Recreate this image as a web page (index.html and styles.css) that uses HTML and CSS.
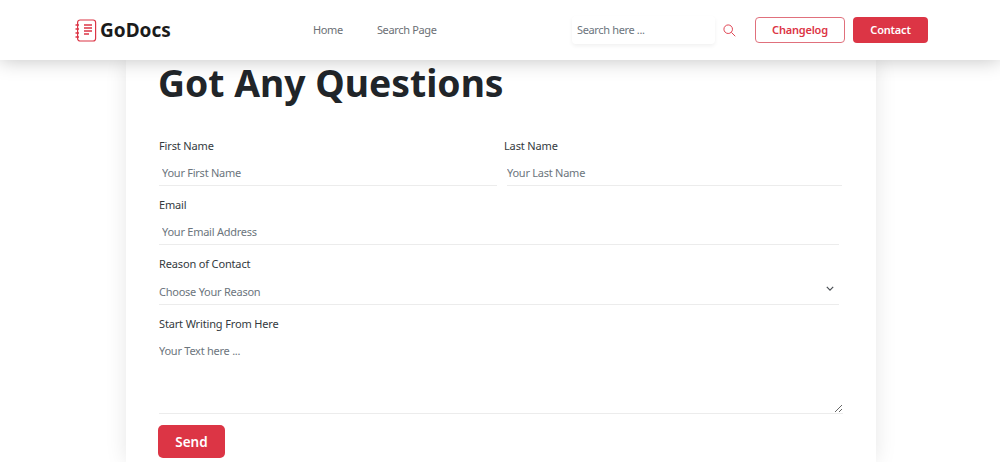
FILE: index.html
```html
<!DOCTYPE html>
<html lang="en">
<head>
  <meta charset="UTF-8" />
  <meta name="viewport" content="width=device-width, initial-scale=1" />
  <title>GoDocs - Contact</title>
  <link rel="stylesheet" href="styles.css">
</head>
<body>
  <header class="topbar">
    <a class="logo" href="#">
      <svg class="logo-icon" viewBox="0 0 22 23" width="22" height="23" fill="none" stroke="#dc3545" stroke-width="1.2">
        <rect x="2.6" y="1" width="18" height="21" rx="2.5" />
        <path d="M0.5 6h3.5M0.5 10h3.5M0.5 14h3.5M0.5 18h3.5" stroke-width="1.6" />
        <path d="M9 6h8M9 9h8M9 12h8M9 15h5" stroke-width="1.4" />
      </svg>
      <span>GoDocs</span>
    </a>
    <nav class="nav">
      <a href="#">Home</a>
      <a href="#">Search Page</a>
    </nav>
    <div class="search">
      <input type="text" placeholder="Search here ..." />
      <svg viewBox="0 0 14 14" width="13" height="13" fill="none" stroke="#dc3545" stroke-width="1">
        <circle cx="5.6" cy="5.6" r="4.6" />
        <path d="M9 9l4.2 4.2" />
      </svg>
    </div>
    <a class="btn btn-outline" href="#">Changelog</a>
    <a class="btn btn-red" href="#">Contact</a>
  </header>

  <main class="card">
    <h1>Got Any Questions</h1>
    <form class="contact-form">
      <div class="row-two">
        <div class="field">
          <label>First Name</label>
          <input type="text" placeholder="Your First Name" />
        </div>
        <div class="field field-last">
          <label>Last Name</label>
          <input type="text" placeholder="Your Last Name" />
        </div>
      </div>
      <div class="field field-wide">
        <label>Email</label>
        <input type="text" placeholder="Your Email Address" />
      </div>
      <div class="field field-wide">
        <label>Reason of Contact</label>
        <div class="select-box">
          <select>
            <option>Choose Your Reason</option>
          </select>
          <svg viewBox="0 0 10 6" width="8" height="5" fill="none" stroke="#4a4f54" stroke-width="1.5">
            <path d="M1 1l4 4 4-4" />
          </svg>
        </div>
      </div>
      <div class="field">
        <label>Start Writing From Here</label>
        <textarea placeholder="Your Text here ..."></textarea>
      </div>
      <button type="button" class="send">Send</button>
    </form>
  </main>
</body>
</html>
```

FILE: styles.css
```css
* {
  box-sizing: border-box;
}

html,
body {
  height: 462px;
  overflow: hidden;
}

body {
  margin: 0;
  font-family: 'Noto Sans', sans-serif;
  background: #fff;
  color: #212529;
}

a {
  text-decoration: none;
}

.topbar {
  position: relative;
  z-index: 2;
  display: flex;
  align-items: center;
  height: 60px;
  padding: 0 72px 0 75px;
  background: #fff;
  box-shadow: 0 0 20px rgba(0, 0, 0, 0.25);
}

.logo {
  display: flex;
  align-items: center;
  gap: 3px;
  width: 238px;
  font-size: 19px;
  font-weight: 700;
  color: #1b1b1b;
}

.nav {
  display: flex;
  gap: 34px;
  width: 259px;
  padding-bottom: 2px;
}

.nav a {
  font-size: 11px;
  letter-spacing: -0.35px;
  color: #6c7075;
}

.search {
  display: flex;
  align-items: center;
  width: 183px;
  height: 28px;
}

.search input {
  width: 143px;
  height: 28px;
  padding: 0 5px 2px;
  margin-right: 8px;
  border: 0;
  border-radius: 4px;
  outline: 0;
  font: 11px 'Noto Sans', sans-serif;
  letter-spacing: -0.35px;
  box-shadow: 0 2px 4px rgba(0, 0, 0, 0.06);
}

input::placeholder,
textarea::placeholder {
  color: #6c757d;
  opacity: 1;
}

.btn {
  display: flex;
  align-items: center;
  justify-content: center;
  height: 26px;
  padding-bottom: 2px;
  border-radius: 4px;
  font-size: 11px;
  font-weight: 600;
  letter-spacing: -0.2px;
}

.btn-outline {
  width: 90px;
  margin-right: 8px;
  border: 1px solid #e0707c;
  color: #dc3545;
}

.btn-red {
  width: 75px;
  background: #dc3545;
  color: #fff;
}

.card {
  width: 750px;
  height: 402px;
  margin: 0 0 0 126px;
  padding: 0 33px;
  background: #fff;
  box-shadow: 0 0 20px rgba(0, 0, 0, 0.1);
}

h1 {
  margin: 0 0 0 -1px;
  font-size: 37.3px;
  line-height: 46px;
  font-weight: 700;
  color: #212529;
}

.contact-form {
  display: flex;
  flex-direction: column;
  padding-top: 31px;
  gap: 10px;
}

.row-two {
  display: flex;
}

.field {
  display: flex;
  flex-direction: column;
}

.row-two .field {
  width: 338px;
}

.field-last {
  margin-left: 7px;
}

label {
  font-size: 11px;
  line-height: 18px;
  letter-spacing: -0.15px;
  color: #343a40;
}

.field input,
.field select,
.field textarea {
  width: 100%;
  border: 0;
  border-bottom: 1px solid #ececec;
  outline: 0;
  background: transparent;
  font: 11px 'Noto Sans', sans-serif;
  letter-spacing: -0.25px;
  color: #6c757d;
}

.field input {
  height: 31px;
  padding: 4px 3px 0;
}

.row-two .field-last input {
  width: 335px;
  margin-left: 3px;
  padding-left: 0;
}

.field-wide {
  width: 680px;
}

.field select {
  height: 32px;
  padding: 5px 0 0;
  appearance: none;
}

.select-box {
  position: relative;
}

.select-box svg {
  position: absolute;
  right: 5px;
  top: 13px;
}

.field textarea {
  width: 684px;
  height: 81px;
  padding: 10px 0 0;
}

.send {
  width: 67px;
  height: 33px;
  margin: 1px 0 0 -1px;
  border: 0;
  border-radius: 5px;
  background: #dc3545;
  color: #fff;
  font: 600 13.5px 'Noto Sans', sans-serif;
}
```
